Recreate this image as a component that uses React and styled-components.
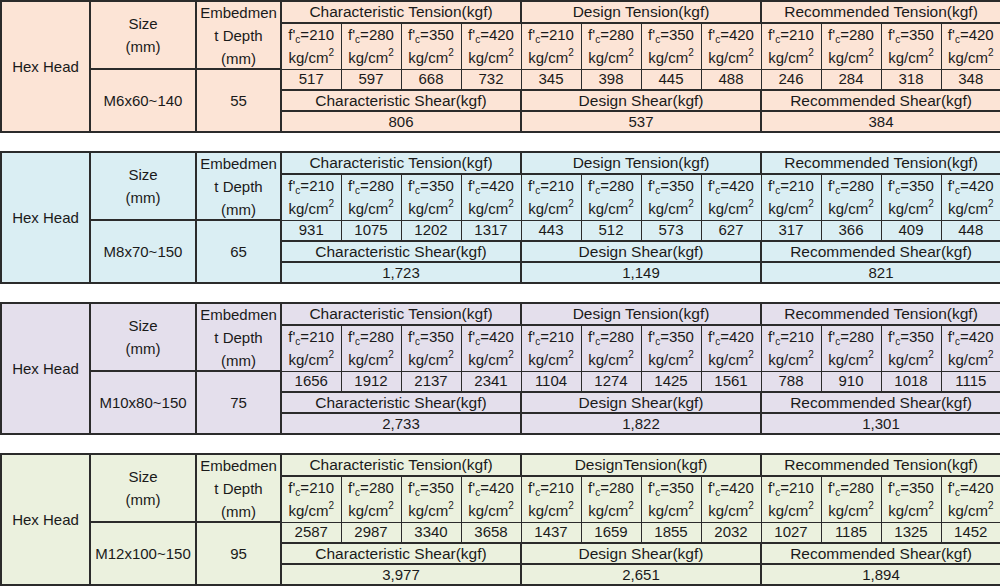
import React from "react";
import styled, { createGlobalStyle } from "styled-components";

const GlobalStyle = createGlobalStyle`
  html, body {
    margin: 0;
    padding: 0;
    background: #ffffff;
  }
  body {
    font-family: "Liberation Sans", Arial, sans-serif;
    color: #1a1a1a;
  }
`;

const Page = styled.div`
  width: 1000px;
  display: flex;
  flex-direction: column;
  gap: 18px;
`;

const Table = styled.table`
  width: 1000px;
  table-layout: fixed;
  border-collapse: collapse;
  background: ${props => props.bg};
  border: 2px solid #2b2b2b;
`;

const Cell = styled.td`
  padding: 0;
  font-family: "Liberation Sans", Arial, sans-serif;
  font-size: ${props => (props.title ? "15.5px" : "15px")};
  line-height: 16px;
  color: #1a1a1a;
  text-align: center;
  vertical-align: middle;
  white-space: nowrap;
  overflow: hidden;
  border: ${props => (props.thick ? "2px" : "1px")} solid #2b2b2b;
`;

const Stack = styled.div`
  height: ${props => props.h}px;
  display: flex;
  flex-direction: column;
  justify-content: center;
  align-items: center;
  line-height: 23px;
`;

const Row = styled.tr`
  height: ${props => props.h}px;
`;

const Sub = styled.sub`
  font-size: 10px;
  line-height: 0;
  vertical-align: -3px;
`;

const Sup = styled.sup`
  font-size: 10px;
  line-height: 0;
  vertical-align: 7px;
`;

const strengths = ["210", "280", "350", "420"];

const tables = [
  {
    bg: "#fce4d6",
    size: "M6x60~140",
    depth: "55",
    groups: [
      { title: "Characteristic Tension(kgf)", values: ["517", "597", "668", "732"], shearTitle: "Characteristic Shear(kgf)", shear: "806" },
      { title: "Design Tension(kgf)", values: ["345", "398", "445", "488"], shearTitle: "Design Shear(kgf)", shear: "537" },
      { title: "Recommended Tension(kgf)", values: ["246", "284", "318", "348"], shearTitle: "Recommended Shear(kgf)", shear: "384" },
    ],
  },
  {
    bg: "#daeef3",
    size: "M8x70~150",
    depth: "65",
    groups: [
      { title: "Characteristic Tension(kgf)", values: ["931", "1075", "1202", "1317"], shearTitle: "Characteristic Shear(kgf)", shear: "1,723" },
      { title: "Design Tension(kgf)", values: ["443", "512", "573", "627"], shearTitle: "Design Shear(kgf)", shear: "1,149" },
      { title: "Recommended Tension(kgf)", values: ["317", "366", "409", "448"], shearTitle: "Recommended Shear(kgf)", shear: "821" },
    ],
  },
  {
    bg: "#e4dfec",
    size: "M10x80~150",
    depth: "75",
    groups: [
      { title: "Characteristic Tension(kgf)", values: ["1656", "1912", "2137", "2341"], shearTitle: "Characteristic Shear(kgf)", shear: "2,733" },
      { title: "Design Tension(kgf)", values: ["1104", "1274", "1425", "1561"], shearTitle: "Design Shear(kgf)", shear: "1,822" },
      { title: "Recommended Tension(kgf)", values: ["788", "910", "1018", "1115"], shearTitle: "Recommended Shear(kgf)", shear: "1,301" },
    ],
  },
  {
    bg: "#ebf1de",
    size: "M12x100~150",
    depth: "95",
    groups: [
      { title: "Characteristic Tension(kgf)", values: ["2587", "2987", "3340", "3658"], shearTitle: "Characteristic Shear(kgf)", shear: "3,977" },
      { title: "DesignTension(kgf)", values: ["1437", "1659", "1855", "2032"], shearTitle: "Design Shear(kgf)", shear: "2,651" },
      { title: "Recommended Tension(kgf)", values: ["1027", "1185", "1325", "1452"], shearTitle: "Recommended Shear(kgf)", shear: "1,894" },
    ],
  },
];

const Strength = ({ value }) => (
  <Stack h={40}>
    <span>
      f'<Sub>c</Sub>={value}
    </span>
    <span>
      kg/cm<Sup>2</Sup>
    </span>
  </Stack>
);

const SpecTable = ({ data }) => (
  <Table bg={data.bg}>
    <colgroup>
      <col style={{ width: 89 }} />
      <col style={{ width: 106 }} />
      <col style={{ width: 85 }} />
      {Array.from({ length: 12 }).map((_, i) => (
        <col key={i} style={{ width: 60 }} />
      ))}
    </colgroup>
    <tbody>
      <Row h={22}>
        <Cell thick rowSpan={5}>Hex Head</Cell>
        <Cell thick rowSpan={2}>
          <Stack h={40}>
            <span>Size</span>
            <span>(mm)</span>
          </Stack>
        </Cell>
        <Cell thick rowSpan={2}>
          <Stack h={60}>
            <span>Embedmen</span>
            <span>t Depth</span>
            <span>(mm)</span>
          </Stack>
        </Cell>
        {data.groups.map(g => (
          <Cell thick title key={g.title} colSpan={4}>{g.title}</Cell>
        ))}
      </Row>
      <Row h={46}>
        {data.groups.map(g =>
          strengths.map(s => (
            <Cell key={g.title + s}>
              <Strength value={s} />
            </Cell>
          ))
        )}
      </Row>
      <Row h={21}>
        <Cell thick rowSpan={3}>{data.size}</Cell>
        <Cell thick rowSpan={3}>{data.depth}</Cell>
        {data.groups.map(g =>
          g.values.map((v, i) => <Cell key={g.title + i}>{v}</Cell>)
        )}
      </Row>
      <Row h={21}>
        {data.groups.map(g => (
          <Cell thick title key={g.shearTitle} colSpan={4}>{g.shearTitle}</Cell>
        ))}
      </Row>
      <Row h={21}>
        {data.groups.map(g => (
          <Cell thick key={g.shearTitle + "v"} colSpan={4}>{g.shear}</Cell>
        ))}
      </Row>
    </tbody>
  </Table>
);

export default function App() {
  return (
    <>
      <GlobalStyle />
      <Page>
        {tables.map(t => (
          <SpecTable key={t.size} data={t} />
        ))}
      </Page>
    </>
  );
}
